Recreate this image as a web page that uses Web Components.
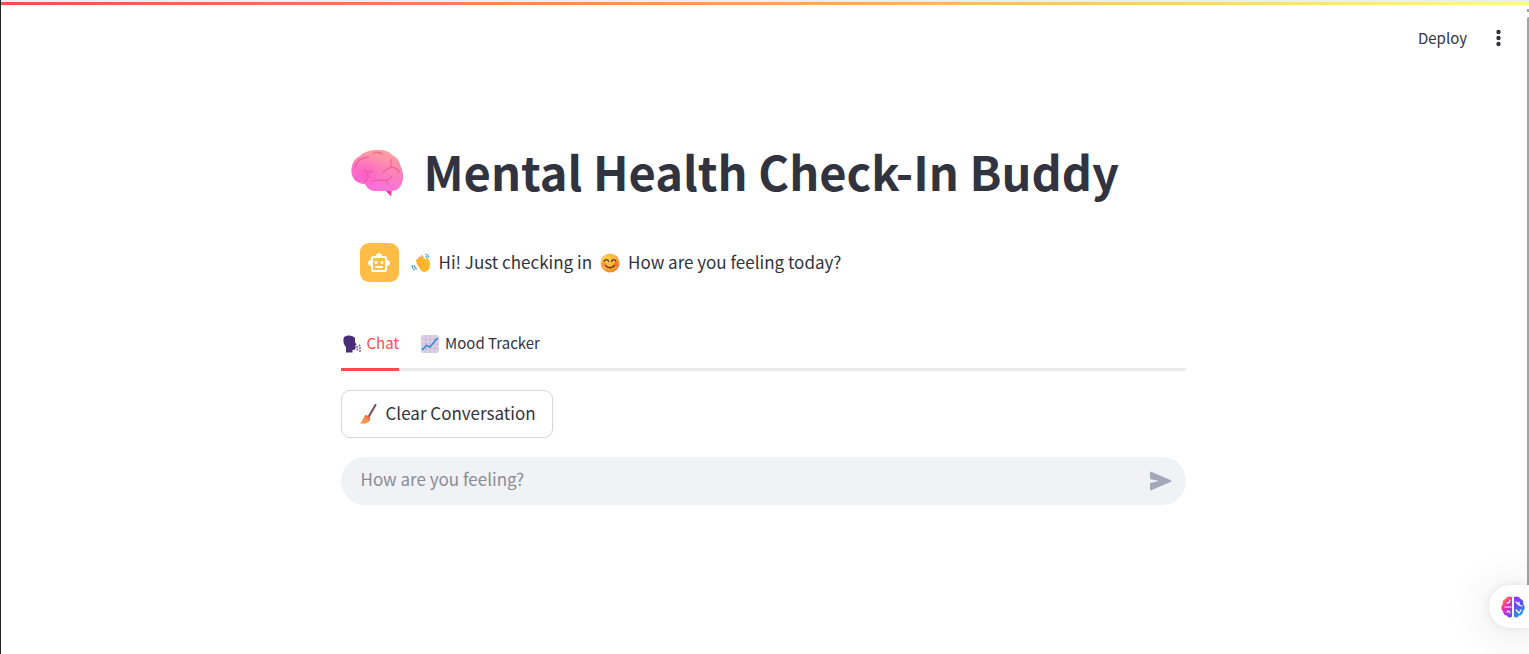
<!DOCTYPE html>
<html lang="en">
<head>
<meta charset="utf-8">
<title>Mental Health Check-In Buddy</title>
<style>
html, body { margin: 0; height: 100%; }
body { background: #fff; color: #31333f; font: 17px/26px "Noto Sans CJK SC", "Noto Sans", sans-serif; overflow: hidden; }
</style>
</head>
<body>
<buddy-app>
  <app-toolbar slot="header"></app-toolbar>
  <page-title>Mental Health Check-In Buddy</page-title>
  <chat-message></chat-message>
  <tab-bar></tab-bar>
  <clear-button>Clear Conversation</clear-button>
  <chat-input></chat-input>
  <assistant-bubble slot="overlay"></assistant-bubble>
</buddy-app>
<script>
function define(name, html) {
  const template = document.createElement('template');
  template.innerHTML = '<style>*{box-sizing:border-box}svg{display:block;flex:none}button{font:inherit;color:inherit;background:none;border:0;padding:0;margin:0;cursor:pointer}span{padding-bottom:2px}</style>' + html;
  customElements.define(name, class extends HTMLElement {
    constructor() {
      super();
      this.attachShadow({ mode: 'open' }).append(template.content.cloneNode(true));
    }
  });
}

define('buddy-app', `
<style>
:host { display: block; position: relative; min-height: 100vh; border-left: 1px solid #222; box-sizing: border-box; overflow: hidden; }
.content { padding-right: 4px; }
main { max-width: 845px; margin: 0 auto; padding: 74px 0 40px; }
.thumb { position: absolute; right: 0; top: 17px; width: 2px; height: 87%; background: #a3a3a6; border-radius: 2px 0 0 0; }
.arrow { position: absolute; right: 0; top: 9px; width: 2px; height: 3px; background: #a3a3a6; }
</style>
<slot name="header"></slot>
<div class="content"><main><slot></slot></main></div>
<div class="arrow"></div>
<div class="thumb"></div>
<slot name="overlay"></slot>`);

define('app-toolbar', `
<style>
:host { display: block; }
.line { height: 5px; background: linear-gradient(90deg, #ff4b4b, #ffa05c 50%, #fffd80); border-top: 2px solid #eceff1; }
header { display: flex; justify-content: flex-end; align-items: center; height: 66px; padding: 0 20px; gap: 20px; font-size: 15px; line-height: 24px; }
</style>
<div class="line"></div>
<header>
  <button type="button"><span>Deploy</span></button>
  <button type="button" aria-label="Main menu"><svg width="22" height="22" viewBox="0 0 22 22" fill="#31333f"><circle cx="11.500" cy="5" r="2.2"/><circle cx="11.500" cy="11" r="2.2"/><circle cx="11.500" cy="17" r="2.2"/></svg></button>
</header>`);

define('page-title', `
<style>
:host { display: block; }
h1 { display: flex; align-items: center; gap: 20px; margin: 0; padding-left: 9px; font-size: 47px; line-height: 52px; font-weight: 700; white-space: nowrap; }
span { padding-bottom: 4px; }
</style>
<h1><svg width="54" height="50" viewBox="0 0 54 50" aria-hidden="true">
<defs><linearGradient id="b" x1=".6" y1="0" x2=".35" y2="1"><stop offset="0" stop-color="#ffa09c"/><stop offset=".45" stop-color="#fb83b7"/><stop offset="1" stop-color="#fa70e2"/></linearGradient>
<radialGradient id="s" cx=".22" cy=".6" r=".5"><stop offset="0" stop-color="#ff55ca" stop-opacity=".8"/><stop offset="1" stop-color="#ff66c8" stop-opacity="0"/></radialGradient></defs>
<path d="M34 41l7 7.500 1-9z" fill="#f233a4"/>
<path d="M1.500 24C1 16 5 10 10 8C15 3 21 2 27 2C33 1.500 39 3 42 7C47 9 50 14 50.500 18C54 24 54 33 51 37C49 42 45 43 40 43L25 43C20 43 17 40 15 36C7 36 2 31 1.500 24Z" fill="url(#b)"/>
<path d="M1.500 24C1 16 5 10 10 8C15 3 21 2 27 2C33 1.500 39 3 42 7C47 9 50 14 50.500 18C54 24 54 33 51 37C49 42 45 43 40 43L25 43C20 43 17 40 15 36C7 36 2 31 1.500 24Z" fill="url(#s)"/>
<g fill="none" stroke="#e8508a" stroke-width="1.400" stroke-linecap="round" opacity=".6"><path d="M5 20C6 13 11 10 18 9M23 5.500C26 3.500 30 4.500 32 6M41 12C40 17 43 19 38 21L33 24M39 20C44 18 48 21 49 24M14 22C17 25 20 24 23 23M17 24C19 28 18 32 14 34M22 33C27 31 29 34 33 32C37 33 41 31 42 28M34 32C38 33 37 35 38 36"/></g></svg>
<span><slot></slot></span></h1>`);

define('chat-message', `
<style>
:host { display: block; padding: 42px 19px 0; }
.row { display: flex; align-items: center; gap: 12px; }
.avatar { width: 39px; height: 39px; border-radius: 9px; background: #ffbd45; display: grid; place-items: center; }
p { margin: 0; display: flex; align-items: center; gap: 8px; }
</style>
<div class="row">
<div class="avatar"><svg width="24" height="24" viewBox="0 0 24 24" fill="#fff"><path d="M20 9V7c0-1.1-.9-2-2-2h-3c0-1.660-1.340-3-3-3S9 3.340 9 5H6c-1.100 0-2 .9-2 2v2c-1.660 0-3 1.340-3 3s1.340 3 3 3v4c0 1.100.9 2 2 2h12c1.100 0 2-.9 2-2v-4c1.660 0 3-1.340 3-3s-1.340-3-3-3zm-2 10H6V7h12v12zm-9-6c-.83 0-1.500-.67-1.500-1.500S8.170 10 9 10s1.500.67 1.500 1.500S9.830 13 9 13zm7.500-1.500c0 .83-.67 1.500-1.500 1.500s-1.500-.67-1.500-1.500.67-1.500 1.500-1.500 1.500.67 1.500 1.500zM8 15h8v2H8v-2z"/></svg></div>
<p><svg width="20" height="22" viewBox="0 0 20 22" aria-hidden="true"><path d="M5.500 11L10 18.500C12 21 16 20 18 17C19.500 14 19 11 18 8L16.500 5.500C15.500 5 15 6 15.500 9L11.500 3.500C10.500 2.500 9 3.500 10 5L8.500 4.500C7 4.500 6.500 5.500 7.500 7L6.500 7C5 7 4.500 8.500 5.500 10Z" fill="#ffb72e"/><path d="M9 6l4 6M7 8l4 6M6 11l4 5" stroke="#ef9536" stroke-width=".8"/><path d="M14 2c2 0 3.500 1.500 4 3.500M14 4c1 0 2 1 2 2M1 13c0 2 1 4 3 5M3 13c0 1 1 3 3 4" fill="none" stroke="#54a9d0" stroke-width="1.200"/></svg>
<span>Hi! Just checking in</span>
<svg width="20" height="20" viewBox="0 0 20 20" aria-hidden="true"><defs><radialGradient id="f" cx=".35" cy=".3" r=".75"><stop offset="0" stop-color="#ffd43d"/><stop offset=".6" stop-color="#ffb238"/><stop offset="1" stop-color="#f47a3d"/></radialGradient></defs><circle cx="10" cy="10" r="9.500" fill="url(#f)"/><ellipse cx="4" cy="11.500" rx="2.500" ry="2" fill="#ff743e" opacity=".6"/><ellipse cx="16" cy="11.500" rx="2.500" ry="2" fill="#ff573e" opacity=".6"/><path d="M4 8.500C5 6 8 6 8.500 8.500M11.500 8.500C12 6 15 6 16 8.500M5.500 12.500C8 15.500 12 15.500 14.500 12.500" fill="none" stroke="#603040" stroke-width="1.300" stroke-linecap="round"/></svg>
<span>How are you feeling today?</span></p>
</div>`);

define('tab-bar', `
<style>
:host { display: block; padding-top: 38px; }
.tabs { display: flex; gap: 22px; height: 51px; border-bottom: 3px solid #ebebed; font-size: 15px; line-height: 24px; }
button { display: flex; align-items: center; gap: 6px; height: 51px; padding-bottom: 3px; white-space: nowrap; }
button[aria-selected=true] { color: #ff4b4b; border-bottom: 3px solid #ff4b4b; padding: 0 0 0 2px; }
</style>
<div class="tabs" role="tablist">
<button type="button" role="tab" aria-selected="true"><svg width="18" height="18" viewBox="0 0 18 18" aria-hidden="true"><path d="M1 2C4-.5 10 0 12 3V7L13.500 9.500L12.500 10.500V14C12 15 10 14.500 9.500 15V17.500H3V12C0 9 0 5 1 2Z" fill="#4b2c78"/><g fill="#78629b"><circle cx="14" cy="12" r="1"/><circle cx="16.500" cy="10.500" r="1"/><circle cx="17" cy="13" r="1"/><circle cx="14.500" cy="14.500" r="1"/><circle cx="17" cy="16" r="1"/></g></svg><span>Chat</span></button>
<button type="button" role="tab" aria-selected="false"><svg width="18" height="18" viewBox="0 0 18 18" aria-hidden="true"><rect width="18" height="18" rx="2" fill="#dcd1e4"/><path d="M4.500 0V18M9 0V18M13.500 0V18M0 4.500H18M0 9H18M0 13.500H18" stroke="#c4b6d0" stroke-width=".7"/><path d="M1 15L5.500 10.500L9 12L16.500 3" fill="none" stroke="#348fd0" stroke-width="1.700"/></svg><span>Mood Tracker</span></button>
</div>`);

define('clear-button', `
<style>
:host { display: block; padding-top: 19px; }
button { display: flex; align-items: center; gap: 9px; height: 48px; padding: 0 16px 0 18px; border: 1px solid #d6d6d9; border-radius: 9px; white-space: nowrap; }
</style>
<button type="button"><svg width="17" height="20" viewBox="0 0 17 20" aria-hidden="true"><path d="M15.500 1L8.500 13" stroke="#82494f" stroke-width="2" stroke-linecap="round"/><path d="M6 11L10 14C10.500 17 8 19 5 19.500H0C3 17 3 13 6 11Z" fill="#f98947"/><path d="M5.500 11.500L10 15" stroke="#f26842" stroke-width="2"/><path d="M2 19L6 15M5 19L8 16" stroke="#ffae51" stroke-width=".8"/></svg><span><slot></slot></span></button>`);

define('chat-input', `
<style>
:host { display: block; padding-top: 19px; }
form { display: flex; align-items: center; height: 48px; border-radius: 24px; background: #f0f2f6; padding: 0 12px 0 20px; }
input { flex: 1; min-width: 0; height: 32px; padding: 0 0 6px; border: 0; outline: 0; background: none; font: inherit; color: #31333f; }
input::placeholder { color: #8a8c95; opacity: 1; }
</style>
<form><input type="text" aria-label="How are you feeling?" placeholder="How are you feeling?">
<button type="button" aria-label="Send"><svg width="28" height="28" viewBox="0 0 28 28"><path d="M4 5.500Q4 4.300 5.200 4.800L25 13.300Q26 14 25 14.700L5.200 23.200Q4 23.700 4 22.500V16L13 14L4 12Z" fill="#a3a8b8"/></svg></button></form>`);

define('assistant-bubble', `
<style>
:host { position: absolute; right: 0; bottom: 26px; display: block; }
button { display: flex; align-items: center; width: 40px; height: 43px; padding-left: 12px; background: #fff; border-radius: 22px 0 0 22px; box-shadow: 0 0 8px #00000018, 0 4px 40px 10px #00000010; }
</style>
<button type="button" aria-label="Open assistant"><svg width="24" height="22" viewBox="0 0 24 22"><defs><linearGradient id="l" x1="0" y1="0" x2=".6" y2="1"><stop offset=".1" stop-color="#ff9c18"/><stop offset=".5" stop-color="#f52bad"/><stop offset="1" stop-color="#7442f5"/></linearGradient><linearGradient id="r" x1="0" y1="0" x2=".4" y2="1"><stop offset="0" stop-color="#a72cf2"/><stop offset=".55" stop-color="#5657f4"/><stop offset="1" stop-color="#219fee"/></linearGradient></defs>
<path d="M11 1C8-.5 5 1 4.500 3C2 3.500 1 6 2 8C-.5 10 0 14 2 15C2 18 4 20 6 19.500C7 22 10 22 11 20.500Z" fill="url(#l)"/><path d="M13 1C16-.5 19 1 19.500 3C22 3.500 23 6 22 8C24.500 10 24 14 22 15C22 18 20 20 18 19.500C17 22 14 22 13 20.500Z" fill="url(#r)"/><g fill="none" stroke="#fff" stroke-width="1.200" stroke-linecap="round"><path d="M4 11H10M9 4C9 6 8 7 6 7M6 16C8 14 9 16 9 17M15 6L18 9M18 6V9L21 10M15 14L18 17L20 14"/></g></svg></button>`);
</script>
</body>
</html>
